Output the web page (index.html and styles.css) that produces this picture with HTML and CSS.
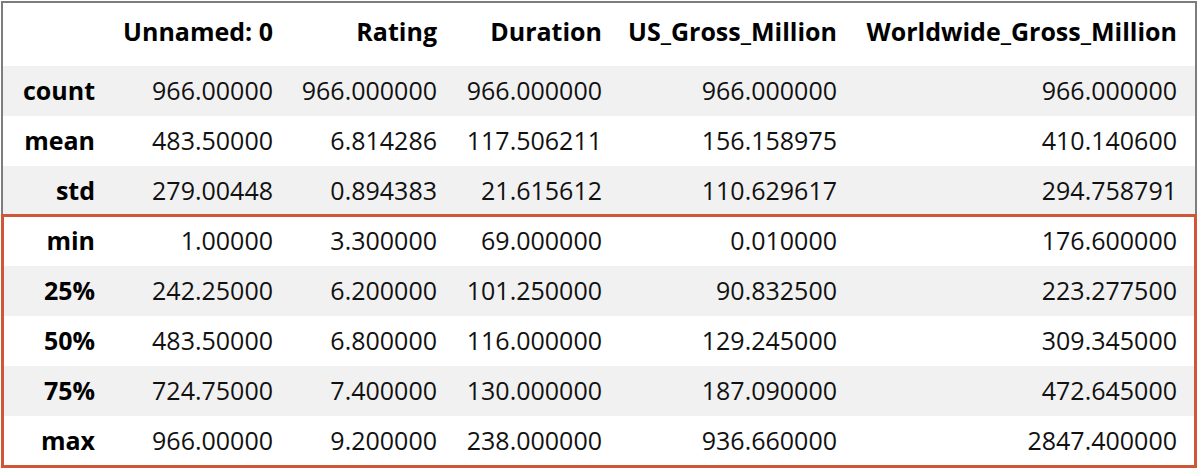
FILE: index.html
```html
<!DOCTYPE html>
<html>
<head>
<meta charset="utf-8">
<link rel="stylesheet" href="styles.css">
</head>
<body>
<div class="frame">
  <table class="df">
    <colgroup>
      <col class="c-idx"><col class="c-a"><col class="c-b"><col class="c-c"><col class="c-d"><col class="c-e">
    </colgroup>
    <thead>
      <tr><th></th><th>Unnamed: 0</th><th>Rating</th><th>Duration</th><th>US_Gross_Million</th><th>Worldwide_Gross_Million</th></tr>
    </thead>
    <tbody>
      <tr><th>count</th><td>966.00000</td><td>966.000000</td><td>966.000000</td><td>966.000000</td><td>966.000000</td></tr>
      <tr><th>mean</th><td>483.50000</td><td>6.814286</td><td>117.506211</td><td>156.158975</td><td>410.140600</td></tr>
      <tr><th>std</th><td>279.00448</td><td>0.894383</td><td>21.615612</td><td>110.629617</td><td>294.758791</td></tr>
      <tr><th>min</th><td>1.00000</td><td>3.300000</td><td>69.000000</td><td>0.010000</td><td>176.600000</td></tr>
      <tr><th>25%</th><td>242.25000</td><td>6.200000</td><td>101.250000</td><td>90.832500</td><td>223.277500</td></tr>
      <tr><th>50%</th><td>483.50000</td><td>6.800000</td><td>116.000000</td><td>129.245000</td><td>309.345000</td></tr>
      <tr><th>75%</th><td>724.75000</td><td>7.400000</td><td>130.000000</td><td>187.090000</td><td>472.645000</td></tr>
      <tr><th>max</th><td>966.00000</td><td>9.200000</td><td>238.000000</td><td>936.660000</td><td>2847.400000</td></tr>
    </tbody>
  </table>
  <div class="highlight"></div>
</div>
</body>
</html>
```
FILE: styles.css
```css
html, body {
  margin: 0;
  padding: 0;
  background: #ffffff;
}
body {
  font-family: "Open Sans", "Noto Sans", sans-serif;
  color: #111;
}
.frame {
  position: relative;
  margin: 1px 0 0 1px;
  width: 1192px;
  border: 2px solid #7d7d7d;
  border-bottom-color: #d0563a;
}
.df {
  border-collapse: collapse;
  border-spacing: 0;
  table-layout: fixed;
  width: 1192px;
  font-size: 25px;
}
.c-idx { width: 110px; }
.c-a { width: 178px; }
.c-b { width: 164px; }
.c-c { width: 165px; }
.c-d { width: 235px; }
.c-e { width: 340px; }
.df th, .df td {
  text-align: right;
  padding: 0 18px 3px 0;
  white-space: nowrap;
  line-height: 34px;
}
.df th {
  font-weight: 700;
  color: #000;
}
.df thead th {
  padding-bottom: 8px;
}
.df thead tr {
  height: 63px;
}
.df tbody tr {
  height: 50px;
}
.df tbody tr:nth-child(odd) {
  background: #f1f1f1;
}
.highlight {
  position: absolute;
  left: -2px;
  right: -2px;
  top: 211px;
  bottom: -2px;
  border: 3px solid #d0563a;
  pointer-events: none;
}
```
